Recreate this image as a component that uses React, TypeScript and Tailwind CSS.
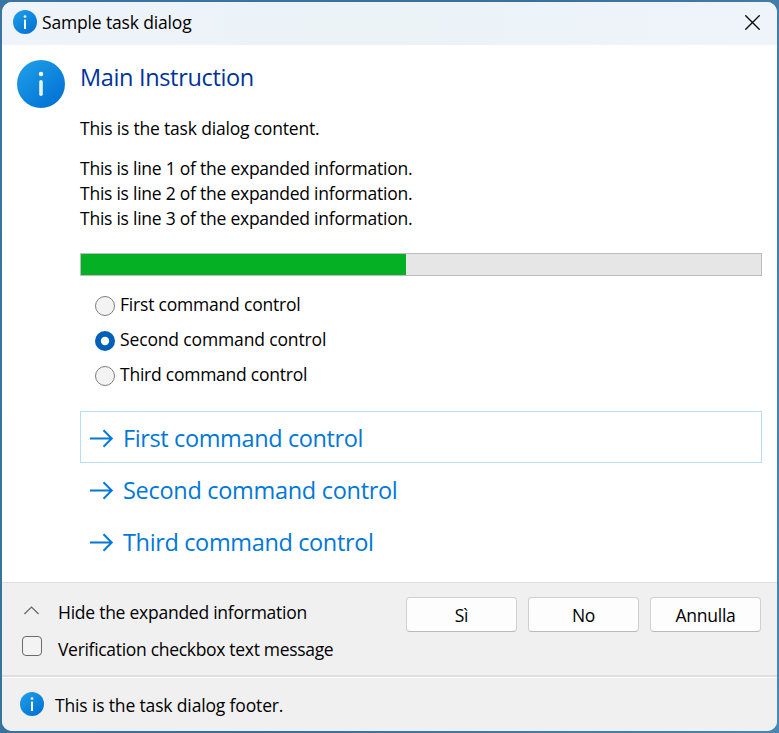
import React from "react";

function InfoIcon({ size, id }: { size: number; id: string }) {
  const small = size < 30;
  return (
    <svg width={size} height={size} viewBox="0 0 48 48" className="block shrink-0">
      <defs>
        <linearGradient id={id} x1="0.15" y1="0.1" x2="0.8" y2="0.9">
          <stop offset="0" stopColor="#1c9be6" />
          <stop offset="1" stopColor="#0474d6" />
        </linearGradient>
      </defs>
      <circle cx="24" cy="24" r="24" fill={`url(#${id})`} />
      <circle cx="24" cy={small ? 13 : 14} r={small ? 2.7 : 2.2} fill="#fff" />
      <rect x={small ? 22 : 22.2} y={small ? 19 : 20} width={small ? 4 : 3.6} height={small ? 19 : 16} rx={small ? 1 : 1.8} fill={small ? "#fff" : "#e6f3fc"} />
    </svg>
  );
}

function Radio({ label, checked, spacing }: { label: string; checked?: boolean; spacing: string }) {
  return (
    <label className="flex h-[35px] items-center gap-[5px]">
      <svg width="20" height="20" viewBox="0 0 20 20" className="mt-[3px] block shrink-0">
        {checked ? (
          <>
            <circle cx="10" cy="10" r="10" fill="#005fb8" />
            <circle cx="10" cy="10" r="4.2" fill="#fff" />
          </>
        ) : (
          <circle cx="10" cy="10" r="9.5" fill="#f3f3f3" stroke="#7d7d7d" />
        )}
      </svg>
      <span className={`leading-[25px] ${spacing}`}>{label}</span>
    </label>
  );
}

function CommandLink({ label, focused, spacing }: { label: string; focused?: boolean; spacing: string }) {
  return (
    <button
      className={`flex h-[52px] w-full items-center border pl-[9px] text-left text-[#0078d7] ${focused ? "border-[#b9dcf5]" : "border-transparent"}`}
    >
      <svg width="24" height="20" viewBox="0 0 24 20" className="mt-[2px] block shrink-0" fill="none" stroke="#0078d7" strokeWidth="1.9">
        <path d="M0 10.5H22M13.5 2.3L21.8 10.5L13.5 18.7" />
      </svg>
      <span className={`mt-[2px] ml-[9px] text-[23.5px] leading-[32px] ${spacing}`}>{label}</span>
    </button>
  );
}

function PushButton({ label }: { label: string }) {
  return (
    <button className="flex h-[35px] w-[111px] items-center justify-center rounded-[4px] border border-[#d0d0d0] border-b-[#bababa] bg-[#fdfdfd] pt-[2px] leading-[25px] tracking-[-0.25px]">
      {label}
    </button>
  );
}

export default function App() {
  return (
    <div className="h-[733px] w-[779px] overflow-hidden bg-[linear-gradient(110deg,#3a74a0_0%,#39709a_50%,#4a86b3_100%)] p-[2px] font-['Open_Sans',sans-serif] text-[17.5px] whitespace-nowrap text-black">
      <div className="flex h-full flex-col overflow-hidden rounded-[10px] bg-white">
        <header className="flex h-[43px] shrink-0 items-center bg-[linear-gradient(90deg,#eff3fa,#ebf3f7_45%,#eff4fa)] pr-[17px] pl-[11px]">
          <div className="-mt-[3px]"><InfoIcon size={24} id="g-title" /></div>
          <h1 className="-mt-[2px] ml-[5px] leading-[25px] tracking-[-0.16px]">Sample task dialog</h1>
          <svg width="15" height="15" viewBox="0 0 15 15" className="-mt-[2px] ml-auto block" stroke="#111" strokeWidth="1.4">
            <path d="M0.3 0.3L14.7 14.7M14.7 0.3L0.3 14.7" />
          </svg>
        </header>

        <main className="flex h-[537px] shrink-0 pr-[15px] pl-[15px]">
          <div className="w-[63px] shrink-0 pt-[15px]"><InfoIcon size={48} id="g-main" /></div>
          <div className="flex-1 pt-[16px]">
            <h2 className="text-[23.5px] leading-[32px] tracking-[-0.34px] text-[#003399]">Main Instruction</h2>
            <p className="mt-[23px] leading-[25px] tracking-[-0.19px]">This is the task dialog content.</p>
            <div className="mt-[15px] leading-[25px] tracking-[-0.245px]">
              <p>This is line 1 of the expanded information.</p>
              <p>This is line 2 of the expanded information.</p>
              <p>This is line 3 of the expanded information.</p>
            </div>
            <div className="mt-[22px] h-[23px] border border-[#bcbcbc] bg-[#e6e6e6]">
              <div className="h-full w-[325px] bg-[#06b025]" />
            </div>
            <div className="mt-[11px] pl-[15px]">
              <Radio label="First command control" spacing="tracking-[-0.2px]" />
              <Radio label="Second command control" checked spacing="tracking-[-0.14px]" />
              <Radio label="Third command control" spacing="tracking-[-0.24px]" />
            </div>
            <div className="mt-[19px]">
              <CommandLink label="First command control" focused spacing="tracking-[-0.38px]" />
              <CommandLink label="Second command control" spacing="tracking-[-0.3px]" />
              <CommandLink label="Third command control" spacing="tracking-[-0.36px]" />
            </div>
          </div>
        </main>

        <section className="flex h-[93px] shrink-0 justify-between border-t border-[#dfdfdf] bg-[#f0f0f0] pr-[16px] pl-[20px]">
          <div className="pt-[17px]">
            <button className="flex items-center">
              <svg width="16" height="9" viewBox="0 0 16 9" className="-mt-[4px] ml-[1px] block" fill="none" stroke="#666" strokeWidth="1.2">
                <path d="M1.4 8L8.5 1L15.6 8" />
              </svg>
              <span className="ml-[19px] leading-[25px] tracking-[-0.25px]">Hide the expanded information</span>
            </button>
            <label className="mt-[12px] flex items-center">
              <span className="-mt-[7px] block size-[20px] rounded-[4px] border border-[#6b6b6b] bg-[#f3f3f3]" />
              <span className="ml-[16px] leading-[25px] tracking-[-0.31px]">Verification checkbox text message</span>
            </label>
          </div>
          <div className="flex gap-[11px] pt-[14px]">
            <PushButton label="Sì" />
            <PushButton label="No" />
            <PushButton label="Annulla" />
          </div>
        </section>

        <footer className="flex flex-1 flex-col bg-[#f0f0f0]">
          <div className="h-[3px] border-t-2 border-[#dfdfdf] bg-white" />
          <div className="flex pt-[14px] pl-[18px]">
            <InfoIcon size={24} id="g-foot" />
            <span className="mt-[1px] ml-[11px] leading-[25px] tracking-[-0.15px]">This is the task dialog footer.</span>
          </div>
        </footer>
      </div>
    </div>
  );
}
